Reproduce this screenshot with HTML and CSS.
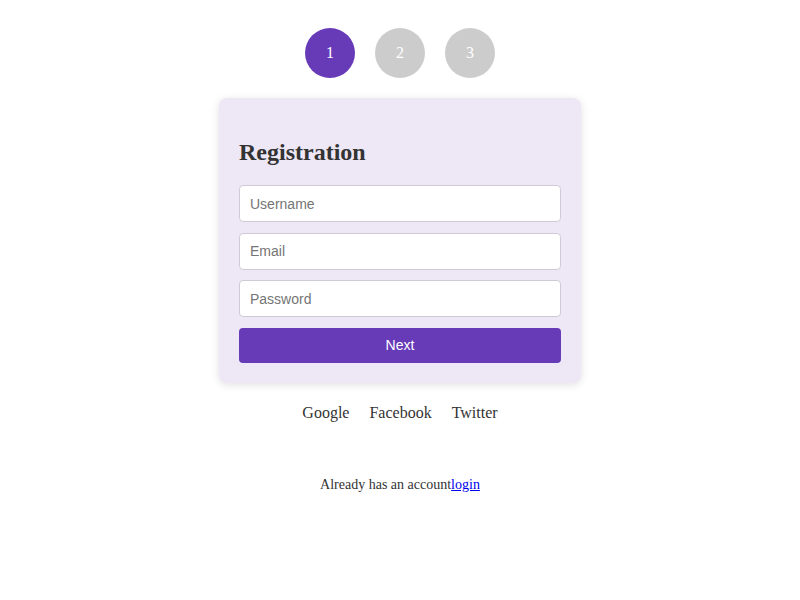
FILE: index.html
```html
<!DOCTYPE html>
<html>
<head>
<meta charset="utf-8">
<link rel="stylesheet" href="styles.css">
</head>
<body>
<div class="page">
  <div class="steps">
    <div class="step active">1</div>
    <div class="step">2</div>
    <div class="step">3</div>
  </div>
  <form class="card">
    <h2 class="title">Registration</h2>
    <input class="field" type="text" placeholder="Username">
    <input class="field" type="email" placeholder="Email">
    <input class="field" type="password" placeholder="Password">
    <button class="next" type="button">Next</button>
  </form>
  <div class="social">
    <span>Google</span>
    <span>Facebook</span>
    <span>Twitter</span>
  </div>
  <p class="already">Already has an account<a href="#">login</a></p>
</div>
</body>
</html>
```
FILE: styles.css
```css
html, body {
  margin: 0;
  padding: 0;
  background: #fff;
}
body {
  font-family: "Liberation Serif", "Times New Roman", serif;
  color: #333;
}
.page {
  display: flex;
  flex-direction: column;
  align-items: center;
  padding-top: 28px;
}
.steps {
  display: flex;
  gap: 20px;
}
.step {
  width: 50px;
  height: 50px;
  border-radius: 50%;
  background: #cccccc;
  color: #fff;
  font-size: 16px;
  display: flex;
  align-items: center;
  justify-content: center;
}
.step.active {
  background: #673ab7;
}
.card {
  margin-top: 20px;
  width: 362px;
  box-sizing: border-box;
  padding: 20px;
  background: #ede7f6;
  border-radius: 8px;
  box-shadow: 0 2px 8px rgba(0, 0, 0, 0.12);
  display: flex;
  flex-direction: column;
}
.title {
  font-size: 24px;
  font-weight: bold;
  color: #333;
  margin: 21px 0 19px;
  line-height: 27px;
}
.field {
  height: 37px;
  box-sizing: border-box;
  padding: 0 10px;
  border: 1px solid #cfcbd6;
  border-radius: 4px;
  background: #fff;
  font-family: "Liberation Sans", Arial, sans-serif;
  font-size: 14px;
  color: #333;
  margin: 0 0 10.5px;
  outline: none;
}
.field::placeholder {
  color: #757575;
}
.next {
  height: 35px;
  border: none;
  border-radius: 4px;
  background: #673ab7;
  color: #fff;
  font-family: "Liberation Sans", Arial, sans-serif;
  font-size: 14px;
  cursor: pointer;
}
.social {
  margin-top: 20px;
  display: flex;
  gap: 20px;
  font-size: 16px;
  line-height: 20px;
}
.already {
  margin: 54px 0 0;
  font-size: 14px;
  line-height: 16px;
}
.already a {
  color: #0000ee;
}
```
